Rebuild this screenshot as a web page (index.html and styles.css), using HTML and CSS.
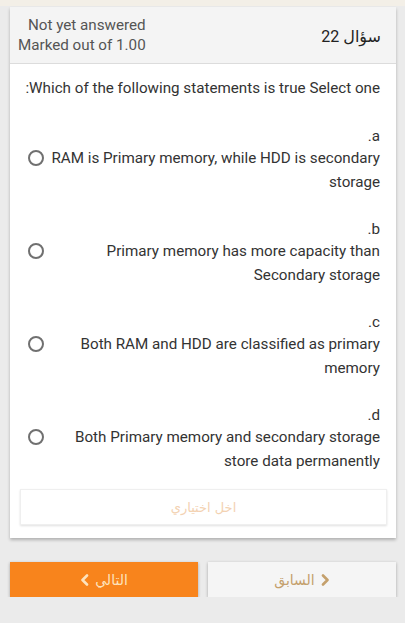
FILE: index.html
```html
<!DOCTYPE html>
<html lang="ar">
<head>
    <meta charset="UTF-8">
    <meta name="viewport" content="width=device-width, initial-scale=1.0">
    <title>سؤال 22</title>
    <link rel="stylesheet" href="styles.css">
</head>
<body>
    <div class="top-strip"></div>
    <div class="question-card">
        <div class="question-info">
            <div class="question-state">
                <div>Not yet answered</div>
                <div>Marked out of 1.00</div>
            </div>
            <div class="question-number" dir="rtl">سؤال 22</div>
        </div>
        <div class="question-body">
            <p class="question-text">:Which of the following statements is true Select one</p>

            <div class="option">
                <div class="option-label">.a</div>
                <div class="option-row">
                    <span class="radio"></span>
                    <span class="option-text">RAM is Primary memory, while HDD is secondary storage</span>
                </div>
            </div>
            <div class="option">
                <div class="option-label">.b</div>
                <div class="option-row">
                    <span class="radio"></span>
                    <span class="option-text">Primary memory has more capacity than Secondary storage</span>
                </div>
            </div>
            <div class="option">
                <div class="option-label">.c</div>
                <div class="option-row">
                    <span class="radio"></span>
                    <span class="option-text">Both RAM and HDD are classified as primary memory</span>
                </div>
            </div>
            <div class="option">
                <div class="option-label">.d</div>
                <div class="option-row">
                    <span class="radio"></span>
                    <span class="option-text">Both Primary memory and secondary storage store data permanently</span>
                </div>
            </div>

            <button class="clear-choice" disabled dir="rtl">اخل اختياري</button>
        </div>
    </div>

    <div class="nav-buttons">
        <button class="nav-next" dir="rtl">التالي <svg class="chev" width="9" height="12" viewBox="0 0 9 12"><path d="M7 1.5 L2.5 6 L7 10.5" fill="none" stroke="currentColor" stroke-width="2.6" stroke-linecap="round" stroke-linejoin="round"/></svg></button>
        <button class="nav-prev" dir="rtl"><svg class="chev" width="9" height="12" viewBox="0 0 9 12"><path d="M7 1.5 L2.5 6 L7 10.5" fill="none" stroke="currentColor" stroke-width="2.6" stroke-linecap="round" stroke-linejoin="round"/></svg> السابق</button>
    </div>
</body>
</html>
```

FILE: styles.css
```css
body {
    margin: 0;
    font-family: Roboto, 'Noto Sans', sans-serif;
    background-color: #ebebeb;
    color: #333;
}

.top-strip {
    height: 6px;
    background: #f3efe7;
}

.question-card {
    margin: 1px 9px 0 10px;
    background: #ffffff;
    box-shadow: 0 2px 3px rgba(0, 0, 0, 0.25);
}

.question-info {
    display: flex;
    justify-content: space-between;
    align-items: center;
    background: #f4f4f4;
    border-bottom: 1px solid #dcdcdc;
    padding: 8px 15px 8px 8px;
}

.question-state {
    text-align: right;
    font-size: 15.2px;
    line-height: 20px;
    color: #555;
}

.question-number {
    font-size: 16px;
    color: #222;
    padding-top: 2px;
    font-family: Roboto, 'DejaVu Sans', sans-serif;
}

.question-body {
    padding: 14px 9px 13px 10px;
}

.question-text {
    margin: 0 7px 28px 0;
    font-size: 15.2px;
    line-height: 20px;
    text-align: right;
    color: #333;
}

.option {
    margin: 0 7px 25px 0;
}

.option:last-of-type {
    margin-bottom: 16px;
}

.option-label {
    text-align: right;
    font-size: 15.2px;
    line-height: 20px;
    color: #333;
}

.option-row {
    display: flex;
    align-items: flex-start;
}

.radio {
    width: 12px;
    height: 12px;
    border: 2px solid #707070;
    border-radius: 50%;
    margin: 4px 0 0 8px;
    flex-shrink: 0;
}

.option-text {
    flex: 1;
    text-align: right;
    font-size: 15.2px;
    line-height: 24px;
    color: #333;
    padding-left: 6px;
}

.clear-choice {
    display: block;
    width: 100%;
    height: 36px;
    background: #ffffff;
    border: 1px solid #efefef;
    box-shadow: 0 1px 2px rgba(0, 0, 0, 0.12);
    color: #f3d2b2;
    font-family: 'DejaVu Sans', sans-serif;
    font-size: 13px;
}

.nav-buttons {
    display: grid;
    grid-template-columns: 1fr 1fr;
    gap: 10px;
    margin: 24px 9px 0 10px;
}

.nav-buttons button {
    height: 35px;
    border: none;
    font-family: 'DejaVu Sans', sans-serif;
    font-size: 14px;
    display: flex;
    align-items: center;
    justify-content: center;
    gap: 6px;
    box-shadow: 0 1px 3px rgba(0, 0, 0, 0.3);
}

.nav-next {
    background: #f8841c;
    color: #fde3bd;
}

.nav-prev {
    background: #f5f5f5;
    color: #c4a06c;
}

.nav-prev .chev {
    transform: scaleX(-1);
}
```
